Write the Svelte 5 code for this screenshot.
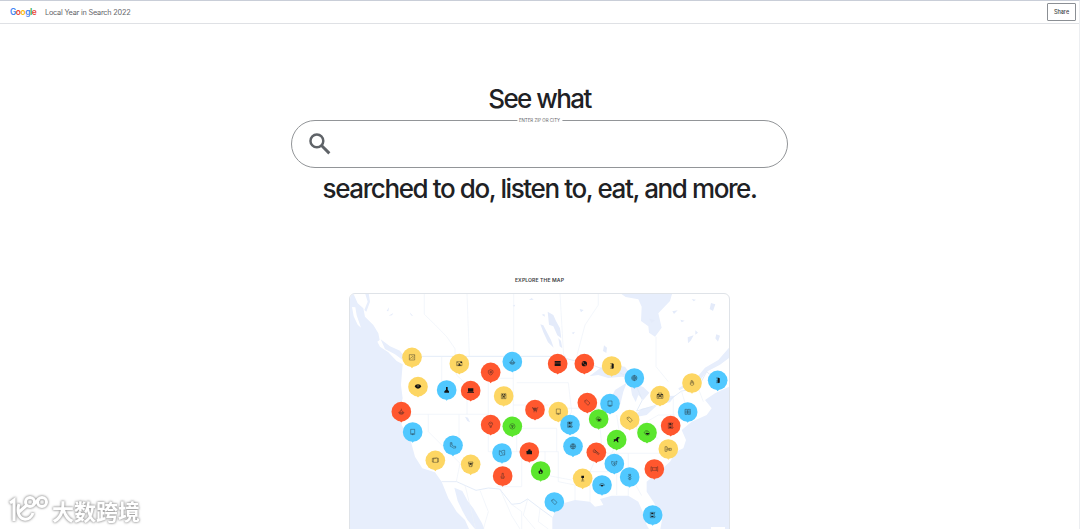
<script>
  // Glyphs are drawn around 0,0 in an 18-unit box. Fill goes to `f`, outlines to `s`.
  const glyphs = {
    photo: { s: 'M-8-8H8V8H-8ZM-7 5L-2 0L2 3M-1-5L3-2L7-6M3 3L7 0' },
    frame: { s: 'M-8-6H8V6H-8ZM-7-5L6 5M-7 5L5-4', f: 'M-4 6L0 0L5 6ZM2-6H8V-2H5Z' },
    shield: { s: 'M0-8L7-5V1L4 6L0 8L-5 5L-7 0V-5ZM-3-3H3V2H-2V-1H1' },
    bowl: { s: 'M-8 2H8Q7 8 0 8Q-7 8-8 2ZM-4 2V-2L0-4V-9M0-4L4-1V2M-5 5H5' },
    rows: { f: 'M-9-8H9V-5H-9ZM-9-4H9V0H-9ZM-9 1H9V7H-9Z' },
    disc: { f: 'M-8 0A8 8 0 0 1 8 0A8 8 0 0 1-8 0ZM-4-5L-1-2L-3 0L-6-3ZM2 1L5 4L3 6L0 3Z' },
    door: { s: 'M-5-7H4V7H-5M-4 0H2M-4 3H2', f: 'M0-8L6-6V7L0 8Z' },
    globe: { s: 'M-8 0A8 8 0 0 1 8 0A8 8 0 0 1-8 0ZM-4 0A4 6 0 0 1 4 0A4 6 0 0 1-4 0ZM-8 0H8M0-8V8' },
    eye: { f: 'M-10-1Q-8-7 0-7Q8-7 10-1Q7 6 0 6Q-7 6-10-1ZM-3-3A3 2 0 0 0 3-3Z' },
    flask: { f: 'M-2-9H3V-1L7 4V8H-7V4L-2-1Z' },
    laptop: { f: 'M-8-7H8V3H-8ZM-10 4H10V6H-10Z' },
    robot: { s: 'M-7-7H7V8H-7ZM-3 8V3H3V8M-7-1H7', f: 'M-5-5H-1V-2H-5ZM1-5H5V-2H1ZM-3 1H3V4H-3Z' },
    house: { s: 'M-9-3H9V8H-9ZM-5-3V-8H5V-3M-4 8V2H4V8M-9 3H-4M4 3H9', f: 'M-9-4H-2V-1H-9ZM2-4H9V-1H2ZM-2-1H2V3H-2Z' },
    hand: { s: 'M-5-1V5Q0 10 5 5V-1M-3-1V-7H0V-1M0-6H3V0M-5 0H5' },
    cart: { s: 'M-9-6H-6L-3 3H5L7-4L9-8M-7-4H6M-5-1H5M-3 3V8M4 3V8M-2-6V3M2-6V3' },
    phone: { s: 'M-6-8H6V7H-6ZM-4 5H4M-2 8H2' },
    tag: { s: 'M-8-6L-2-8L8 1L2 8L-7-1ZM-5-4L-3-3' },
    list: { s: 'M-7-8H5V8H-7ZM-5-4H3M-5 0H3M-5 4H3M5 8L9 5M1-3L8-8', f: 'M-4-7H1V-3H-4ZM-4 3H2V6H-4Z' },
    dish: { s: 'M-8-2Q-4-9 3-5L8 1L6 7H-3L-8 0ZM-4-2H2', f: 'M-5 1H7Q5 7 0 6Z' },
    cards: { s: 'M-8-8H-1V7H-8ZM1-8H8V7H1ZM-8 0H8M-5-5V-2M5-5V-2M-5 2V5M5 2V5' },
    boot: { s: 'M-8-8H-3V0L2 3H8V8H1L-3 5L-8 3ZM-6-4H-3' },
    badge: { s: 'M-6-7H7V6H-6ZM-9-6H-6M7-6H9V5H7M-9 5H-6M-9-6V5M-6-4L4-7' },
    cup: { s: 'M-7-7H7L4 7H-4ZM-7-3H7M-3-3V6M3-3V6', f: 'M-3-3H3L2 1H-2Z' },
    balloon: { s: 'M0-8Q7-7 6-1L2 4H-2L-6-1Q-7-7 0-8ZM-2 4V8H2V4M-3-3H3' },
    leaf: { s: 'M-8 0A8 8 0 0 1 8 0A8 8 0 0 1-8 0ZM-3-3L4-2L0 4ZM0-2V5' },
    scroll: { s: 'M-8-7L-3-5L3-8H8V6H2L-4 8L-8 5ZM-3-5L2 4M3-2L6 1' },
    bag: { f: 'M-9-3L-4-4L-2-8H3L4-4H8V7H-8Z' },
    fire: { f: 'M0-9Q1-4 5-2Q9 3 4 8H-5Q-9 2-4-2Q-3 0-2 0Q-2-5 0-9ZM0 1Q-4 4-1 7H2Q4 4 0 1Z' },
    vase: { s: 'M-2-8H2V-2L5 2L4 7H-4L-5 2L-2-2ZM-4 3H4' },
    tool: { s: 'M-10-5L-6-9L-1-3L9 4L6 7L-2 1L-8 0ZM-6-4L-1 0M-4-7L6 4' },
    dino: { f: 'M-9-1H-4L-1-4L2-8L8-7L9-4H5L4 3L6 8H2L0 4L-5 3L-7 7H-9L-8 2Z' },
    mask: { s: 'M-8-7L-2-5H3L8-8L6 2L1 7L-5 5L-8-1ZM-4-1L0 2L4-1M1-4V4' },
    spine: { s: 'M-3-8H3L2-5L4-2L2 1L4 4L2 8H-2L-4 5L-1 2L-4-1L-2-4ZM-2-4H2M-2 1H2M-2 5H2' },
    ticket: { s: 'M-10-7V7M10-7V7M-10-7L-6-4H6L10-7M-10 7L-6 4H6L10 7M-6-4V4M6-4V4' },
    snack: { s: 'M-10-7H-4L-2-3L-4 7H-10ZM-8-3H-4M-8 2H-3M1-2H9V4H1ZM-2 0H1M4-2V4' },
    medal: { s: 'M0 0V7M-5 8H5M-3 4H3', f: 'M-4-8H4V-3L0 1L-4-3Z' },
    lens: { s: 'M-8 0Q0-8 8 0Q0 8-8 0M-3-3V-6M3-3V-6', f: 'M-4 0H4L2 4H-2Z' }
  };

  const pins = [
    [201, 217, 'yellow', 'photo'],
    [343, 236, 'yellow', 'frame'],
    [502, 230, 'blue', 'bowl'],
    [437, 262, 'red', 'shield'],
    [638, 236, 'red', 'rows'],
    [718, 236, 'red', 'disc'],
    [800, 243, 'yellow', 'door'],
    [868, 279, 'blue', 'globe'],
    [1041, 294, 'yellow', 'hand'],
    [1118, 286, 'blue', 'door'],
    [219, 305, 'yellow', 'eye'],
    [305, 315, 'blue', 'flask'],
    [377, 317, 'red', 'laptop'],
    [476, 333, 'yellow', 'robot'],
    [945, 332, 'yellow', 'house'],
    [169, 380, 'red', 'bowl'],
    [203, 441, 'blue', 'phone'],
    [570, 374, 'red', 'cart'],
    [640, 380, 'yellow', 'phone'],
    [727, 353, 'red', 'tag'],
    [795, 356, 'blue', 'phone'],
    [1028, 381, 'blue', 'cards'],
    [437, 419, 'red', 'balloon'],
    [502, 424, 'green', 'leaf'],
    [675, 419, 'blue', 'list'],
    [761, 402, 'green', 'dish'],
    [854, 404, 'yellow', 'tag'],
    [977, 422, 'red', 'list'],
    [906, 443, 'green', 'dish'],
    [815, 464, 'green', 'dino'],
    [324, 481, 'blue', 'boot'],
    [271, 526, 'yellow', 'badge'],
    [377, 538, 'yellow', 'cup'],
    [471, 504, 'blue', 'scroll'],
    [553, 501, 'red', 'bag'],
    [684, 484, 'blue', 'globe'],
    [754, 502, 'red', 'tool'],
    [970, 492, 'yellow', 'snack'],
    [808, 536, 'blue', 'mask'],
    [473, 573, 'red', 'vase'],
    [587, 558, 'green', 'fire'],
    [713, 580, 'yellow', 'medal'],
    [771, 600, 'blue', 'lens'],
    [854, 576, 'blue', 'spine'],
    [928, 552, 'red', 'ticket'],
    [628, 651, 'blue', 'tag'],
    [923, 690, 'blue', 'list']
  ];

  const logo = ['#4285f4', '#ea4335', '#fbbc05', '#4285f4', '#34a853', '#ea4335'];
</script>

<div class="page">
  <header>
    <div class="brand">
      <span class="google">{#each 'Google' as letter, i}<b style="color: {logo[i]}">{letter}</b>{/each}</span>
      <span class="title">Local Year in Search 2022</span>
    </div>
    <button class="share">Share</button>
  </header>

  <main>
    <h1>See what</h1>
    <label class="search">
      <span class="hint">ENTER ZIP OR CITY</span>
      <svg class="magnifier" viewBox="0 0 24 24" fill="none" stroke="#5f6368">
        <circle cx="8.6" cy="8.6" r="7" stroke-width="2.7" />
        <path d="M13.4 13.4L22.2 22.2" stroke-width="3.2" />
      </svg>
      <input type="text" aria-label="Enter zip or city" />
    </label>
    <h2>searched to do, listen to, eat, and more.</h2>

    <p class="explore">EXPLORE THE MAP</p>
    <div class="map">
      <svg viewBox="12 24 1140 708">
        <g class="water">
          <path d="M12 24L25 25L38 55L55 70L60 95L85 120L100 145L104 165L97 170L105 185L130 202L155 228L173 238L168 300L173 340L168 360L170 420L195 460L210 515L232 550L270 562L290 590L310 640L335 680L360 705L372 732H12Z" />
          <path d="M60 24L68 50L58 75L64 80L75 50L71 24ZM107 163L135 184L165 197L176 212L173 225L150 208L120 192Z" />
          <path d="M328 608L352 618L368 648L385 670L411 715L418 732H390L367 704L352 677L338 648Z" />
          <path d="M622 732V700L630 680L655 655L690 645L735 650L750 665L775 660L765 642L800 632L850 632L880 650L893 680L905 720L912 732Z" />
          <path d="M946 732L952 700L925 650L905 620L905 590L930 570L975 530L993 500L1015 490L1023 465L1010 435L1040 410L1085 390L1100 370L1080 345L1110 325L1153 305V732Z" />
          <path d="M825 24L842 36L880 43L890 65L888 108L910 124L912 143L930 155L950 128L940 85L975 48L982 24Z" />
          <path d="M1153 187L1120 225L1080 248L1055 278L1000 310L1003 316L1068 283L1085 260L1125 239L1153 218Z" />
          <path d="M733 274L765 250L790 238L840 245L865 280L830 275L790 279L760 270ZM797 342L810 315L845 293L835 320L826 358L810 361ZM855 293L895 306L913 323L895 345L880 330L872 351L861 330ZM862 398L890 371L935 362L905 390ZM929 358L965 333L990 332L975 352Z" />
        </g>
        <g class="lake">
          <path d="M608 80L625 90L633 108L645 130L649 160L637 151L625 124L612 119ZM586 118L595 121L618 165L626 188L609 172L596 144ZM640 159L648 168L652 190L644 184ZM777 181L786 188L784 204L774 198ZM644 240L654 222L660 208L664 230L655 249ZM360 395L369 398L375 412L367 408ZM1098 54L1111 58L1104 78L1094 72ZM1028 157L1046 151L1037 167L1029 175ZM1114 148L1125 152L1119 170L1111 160ZM982 79L998 76L987 87ZM912 101L930 105L920 114Z" />
          <path d="M590 89L598 87L600 95ZM680 143L690 140L685 148ZM503 61L511 59L507 66ZM552 45L560 39L566 44ZM704 72L716 75L708 82ZM1006 104L1019 107L1010 112ZM1051 136L1059 143L1051 149ZM1040 42L1053 44L1046 49ZM131 92L145 84L141 91ZM125 78L132 67L130 79ZM194 82L205 94L198 91Z" />
        </g>
        <path class="island" d="M21 66L31 67L35 91L48 128L38 119L26 94Z" />
        <g class="border">
          <path d="M172 214H640L680 225L730 235L762 248L812 257L855 279L877 310L892 345L875 378L925 363L980 340L1010 318L1058 310L1085 260L1105 278L1110 310M290 590L335 590L393 616L430 609L464 612L500 658L526 655L548 642L585 670L622 697" />
          <path d="M238 26V88L271 120L305 155L330 191V214M366 26L373 214M506 26V214M645 26L656 214M760 26V60L720 120L695 214M933 155V245L970 290M290 214V300M325 214L335 270L366 300V388M342 388V497M170 388H430V500H640M250 388V440L345 535L334 590M430 388V280H505M505 214V360H610M515 293H670M505 360V430H515V500M515 430H635M530 500V605H455M600 500V570L680 585M640 500V590L690 600V645M635 430V500M670 293L680 380L650 430M670 370H760L770 480L735 560V650M735 560H850L890 632M765 505H980M850 505V632M815 505V630M815 390L825 455L800 505M875 380V440L940 460M880 425L940 390H990M985 340V420M1010 320L1025 370L1060 375M1060 310L1075 350M465 612L500 692L525 732M500 658L530 680V732M548 642L535 690L570 732M585 670L580 710L610 732M360 600L392 732M405 616L430 680L415 732" />
        </g>
        {#each pins as [x, y, color, icon]}
          <g transform="translate({x} {y})">
            <path class={color} d="M-4 28L0 32.5L4 28Z" />
            <circle class={color} r="29.5" />
            {#if glyphs[icon].f}<path class="solid" d={glyphs[icon].f} />{/if}
            {#if glyphs[icon].s}<path class="line" d={glyphs[icon].s} />{/if}
          </g>
        {/each}
        <rect x="1098" y="726" width="42" height="8" fill="#fff" />
      </svg>
    </div>
  </main>

  <div class="watermark">
    <svg viewBox="0 0 42 30" fill="none" stroke="#fff" stroke-width="3">
      <path d="M2 8L6 5V26M11 9C9 15 10 23 16 24C20 25 24 22 25 18M11 17L19 10" />
      <circle cx="22" cy="7" r="4.5" />
      <circle cx="34" cy="7" r="4.5" />
      <path d="M25 10L31 4" />
    </svg>
    <span>大数跨境</span>
  </div>
</div>

<style>
  :global(body) {
    background: #fff;
    overflow: hidden;
  }
  .page {
    position: relative;
    box-sizing: border-box;
    height: 529px;
    overflow: hidden;
    border-top: 1px solid #c9ced8;
    border-right: 1px solid #eceef1;
    font-family: Inter, 'Liberation Sans', sans-serif;
    color: #202124;
  }
  header {
    box-sizing: border-box;
    height: 23px;
    padding: 0 3px 0 10px;
    display: flex;
    align-items: center;
    justify-content: space-between;
    border-bottom: 1px solid #dfe1e5;
  }
  .brand {
    display: flex;
    align-items: center;
    gap: 9px;
  }
  .google {
    width: 26px;
    font-size: 8.4px;
    letter-spacing: -0.45px;
  }
  .google b {
    font-weight: 600;
  }
  .title {
    font-size: 7.3px;
    letter-spacing: -0.21px;
    color: #5f6368;
    white-space: nowrap;
  }
  .share {
    box-sizing: border-box;
    width: 29px;
    height: 18px;
    padding: 0;
    border: 1px solid #8b8f94;
    border-radius: 1px;
    background: #fff;
    color: #3c4043;
    font: 500 5.5px Inter, sans-serif;
  }
  main {
    display: flex;
    flex-direction: column;
    align-items: center;
  }
  h1,
  h2 {
    margin: 0;
    font-size: 26px;
    line-height: 36px;
    font-weight: 500;
    white-space: nowrap;
  }
  h1 {
    margin-top: 57px;
    letter-spacing: -1.55px;
  }
  h2 {
    margin-top: 3px;
    letter-spacing: -1.4px;
  }
  .search {
    position: relative;
    box-sizing: border-box;
    display: flex;
    align-items: center;
    width: 497px;
    height: 48px;
    margin-top: 3px;
    padding: 0 17px;
    border: 1px solid #929598;
    border-radius: 24px;
  }
  .hint {
    position: absolute;
    top: -4px;
    left: 50%;
    transform: translateX(-50%);
    padding: 0 2px;
    background: #fff;
    color: #5f6368;
    font-size: 4.4px;
    line-height: 7px;
    white-space: nowrap;
  }
  .magnifier {
    width: 22px;
    height: 22px;
  }
  input {
    flex: 1;
    margin-left: 10px;
    border: 0;
    outline: 0;
    background: none;
    font: 18px Inter, sans-serif;
  }
  .explore {
    margin: 68px 0 8px;
    font-size: 5.1px;
    line-height: 10px;
    font-weight: 600;
    letter-spacing: 0.1px;
    color: #3c4043;
  }
  .map {
    box-sizing: border-box;
    width: 381px;
    height: 270px;
    flex: none;
    overflow: hidden;
    border: 1px solid #dfe3e8;
    border-radius: 6px;
  }
  .map svg {
    display: block;
    width: 380px;
    height: 236px;
    margin: -1px 0 0 -1px;
  }
  .water {
    fill: #e7eefc;
  }
  .lake {
    fill: #e4ebfa;
  }
  .island {
    fill: #fff;
  }
  .border {
    fill: none;
    stroke: #edf1f9;
    stroke-width: 2;
  }
  .border path:first-child {
    stroke: #dfe8f6;
    stroke-width: 2.5;
  }
  .yellow {
    fill: #fdd663;
  }
  .blue {
    fill: #50c8ff;
  }
  .red {
    fill: #ff572e;
  }
  .green {
    fill: #5be62d;
  }
  .solid {
    fill: #151515;
    fill-rule: evenodd;
  }
  .line {
    fill: none;
    stroke: #202124;
    stroke-opacity: 0.75;
    stroke-width: 1.5;
  }
  .watermark {
    position: absolute;
    left: 8px;
    bottom: 4px;
    display: flex;
    align-items: center;
    gap: 2px;
    color: #fff;
    font: 700 22px 'Noto Sans CJK SC', sans-serif;
    line-height: 30px;
    filter: drop-shadow(0 0 1px #999) drop-shadow(0 0 1px #bbb);
  }
  .watermark svg {
    width: 42px;
    height: 30px;
  }
</style>
